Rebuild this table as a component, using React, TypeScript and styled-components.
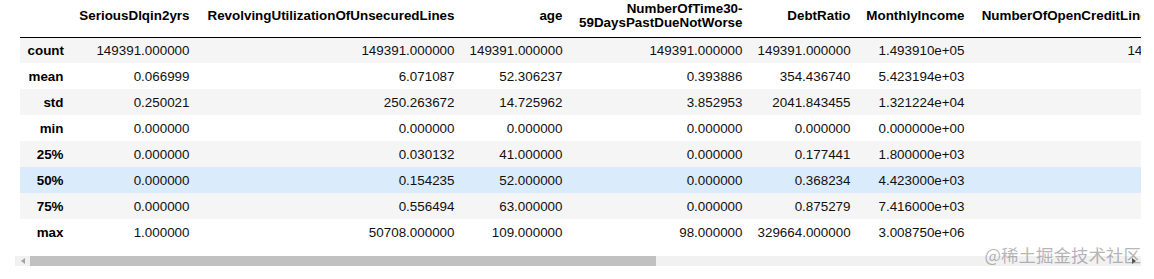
import * as React from "react";
import styled, { createGlobalStyle } from "styled-components";

const GlobalStyle = createGlobalStyle`
  html, body {
    margin: 0;
    padding: 0;
    background: #fff;
  }
  body {
    font-family: "Liberation Sans", Arial, sans-serif;
  }
`;

type Tone = "stripe" | "plain" | "hover";

const columns: { label: React.ReactNode; width: number }[] = [
    { label: "", width: 51 },
    { label: "SeriousDlqin2yrs", width: 126 },
    { label: "RevolvingUtilizationOfUnsecuredLines", width: 265 },
    { label: "age", width: 108 },
    {
        label: (
            <>
                NumberOfTime30-
                <br />
                59DaysPastDueNotWorse
            </>
        ),
        width: 180,
    },
    { label: "DebtRatio", width: 108 },
    { label: "MonthlyIncome", width: 114 },
    { label: "NumberOfOpenCreditLinesAndLoans", width: 256 },
];

const rows: { name: string; tone: Tone; values: string[] }[] = [
    {
        name: "count",
        tone: "stripe",
        values: ["149391.000000", "149391.000000", "149391.000000", "149391.000000", "149391.000000", "1.493910e+05", "149391.000000"],
    },
    {
        name: "mean",
        tone: "plain",
        values: ["0.066999", "6.071087", "52.306237", "0.393886", "354.436740", "5.423194e+03", "8.480763"],
    },
    {
        name: "std",
        tone: "stripe",
        values: ["0.250021", "250.263672", "14.725962", "3.852953", "2041.843455", "1.321224e+04", "5.136515"],
    },
    {
        name: "min",
        tone: "plain",
        values: ["0.000000", "0.000000", "0.000000", "0.000000", "0.000000", "0.000000e+00", "0.000000"],
    },
    {
        name: "25%",
        tone: "stripe",
        values: ["0.000000", "0.030132", "41.000000", "0.000000", "0.177441", "1.800000e+03", "5.000000"],
    },
    {
        name: "50%",
        tone: "hover",
        values: ["0.000000", "0.154235", "52.000000", "0.000000", "0.368234", "4.423000e+03", "8.000000"],
    },
    {
        name: "75%",
        tone: "stripe",
        values: ["0.000000", "0.556494", "63.000000", "0.000000", "0.875279", "7.416000e+03", "11.000000"],
    },
    {
        name: "max",
        tone: "plain",
        values: ["1.000000", "50708.000000", "109.000000", "98.000000", "329664.000000", "3.008750e+06", "58.000000"],
    },
];

const OutputArea = styled.div`
    position: relative;
    width: 1154px;
    height: 279px;
    padding-left: 15px;
    box-sizing: border-box;
    overflow: hidden;
`;

const Viewport = styled.div`
    width: 1121px;
    margin-left: 5px;
    overflow: hidden;
`;

const Table = styled.table`
    border-collapse: collapse;
    table-layout: fixed;
    width: 1208px;
    font-size: 13.4px;
    color: #111;
`;

const Col = styled.col<{ $width: number }>`
    width: ${(p) => p.$width}px;
`;

const Head = styled.thead`
    border-bottom: 1px solid #000;
`;

const HeadCell = styled.th`
    box-sizing: border-box;
    height: 37px;
    padding: 0 7.5px 5px;
    text-align: right;
    vertical-align: middle;
    font-weight: bold;
    line-height: 14px;
    white-space: nowrap;
    color: #000;
`;

const toneColor: Record<Tone, string> = {
    stripe: "#f5f5f5",
    plain: "#ffffff",
    hover: "#daebfc",
};

const Row = styled.tr<{ $tone: Tone }>`
    background: ${(p) => toneColor[p.$tone]};
`;

const IndexCell = styled.th`
    box-sizing: border-box;
    height: 26px;
    padding: 0 7.5px;
    text-align: right;
    vertical-align: middle;
    font-weight: bold;
    white-space: nowrap;
    color: #000;
`;

const Cell = styled.td`
    box-sizing: border-box;
    height: 26px;
    padding: 0 7.5px;
    text-align: right;
    vertical-align: middle;
    white-space: nowrap;
`;

const ScrollTrack = styled.div`
    display: flex;
    width: 1126px;
    height: 10px;
    margin-top: 11px;
    background: #f1f1f1;
`;

const ScrollButton = styled.div<{ $width: number }>`
    flex: 0 0 ${(p) => p.$width}px;
    display: flex;
    align-items: center;
    justify-content: center;
`;

const Arrow = styled.div<{ $dir: "left" | "right"; $color: string }>`
    width: 0;
    height: 0;
    border-top: 3px solid transparent;
    border-bottom: 3px solid transparent;
    ${(p) =>
        p.$dir === "left"
            ? `border-right: 4px solid ${p.$color};`
            : `border-left: 4px solid ${p.$color};`}
`;

const Thumb = styled.div`
    flex: 0 0 626px;
    background: #c1c1c1;
`;

const TrackRest = styled.div`
    flex: 1 1 auto;
`;

const Watermark = styled.div`
    position: absolute;
    right: 13px;
    top: 246px;
    font-family: "Noto Sans CJK SC", "Liberation Sans", sans-serif;
    font-size: 17.5px;
    line-height: 1;
    color: rgba(110, 110, 110, 0.5);
    white-space: nowrap;
    pointer-events: none;
`;

export default function App() {
    return (
        <>
            <GlobalStyle />
            <OutputArea>
                <Viewport>
                    <Table>
                        <colgroup>
                            {columns.map((c, i) => (
                                <Col key={i} $width={c.width} />
                            ))}
                        </colgroup>
                        <Head>
                            <tr>
                                {columns.map((c, i) => (
                                    <HeadCell key={i}>{c.label}</HeadCell>
                                ))}
                            </tr>
                        </Head>
                        <tbody>
                            {rows.map((r) => (
                                <Row key={r.name} $tone={r.tone}>
                                    <IndexCell>{r.name}</IndexCell>
                                    {r.values.map((v, i) => (
                                        <Cell key={i}>{v}</Cell>
                                    ))}
                                </Row>
                            ))}
                        </tbody>
                    </Table>
                </Viewport>
                <ScrollTrack>
                    <ScrollButton $width={15}>
                        <Arrow $dir="left" $color="#a3a3a3" />
                    </ScrollButton>
                    <Thumb />
                    <TrackRest />
                    <ScrollButton $width={15}>
                        <Arrow $dir="right" $color="#505050" />
                    </ScrollButton>
                </ScrollTrack>
                <Watermark>@稀土掘金技术社区</Watermark>
            </OutputArea>
        </>
    );
}
